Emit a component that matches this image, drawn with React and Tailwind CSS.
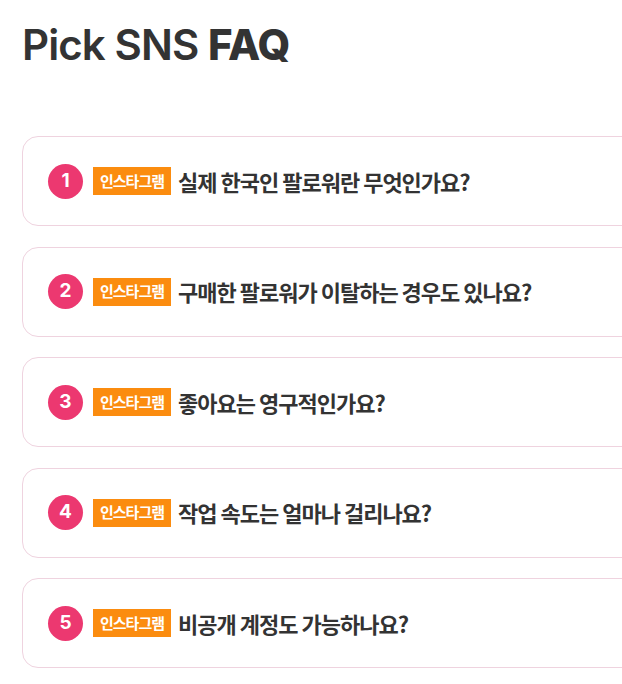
const faqs = [
  '실제 한국인 팔로워란 무엇인가요?',
  '구매한 팔로워가 이탈하는 경우도 있나요?',
  '좋아요는 영구적인가요?',
  '작업 속도는 얼마나 걸리나요?',
  '비공개 계정도 가능하나요?',
]

export default function App() {
  return (
    <div className="h-screen w-full overflow-hidden bg-white text-[#333] font-['Inter','Noto_Sans_CJK_KR',sans-serif]">
      <div className="pl-[22px] pt-[20px]">
        <h1 className="text-[42px] leading-[50px] tracking-[-0.9px] font-semibold">
          Pick SNS <span className="font-extrabold">FAQ</span>
        </h1>

        <ul className="mt-[66px] flex w-[720px] flex-col gap-[20.5px]">
          {faqs.map((q, i) => (
            <li
              key={i}
              className="flex h-[90px] items-center rounded-[16px] border border-[#efd3df] pl-[25px]"
            >
              <span className="grid h-[35px] w-[35px] place-items-center rounded-full bg-[#ec3870] font-['Inter',sans-serif] text-[19px] font-bold text-white">
                {i + 1}
              </span>
              <span className="ml-[10px] grid h-[28px] w-[78px] place-items-center bg-[#fb8c0f] font-['Noto_Sans_CJK_KR',sans-serif] text-[15px] font-semibold tracking-[-1px] text-white">
                인스타그램
              </span>
              <span className="ml-[7px] font-['Noto_Sans_CJK_KR',sans-serif] text-[22px] font-bold tracking-[-1px] text-[#333]">
                {q}
              </span>
            </li>
          ))}
        </ul>
      </div>
    </div>
  )
}
